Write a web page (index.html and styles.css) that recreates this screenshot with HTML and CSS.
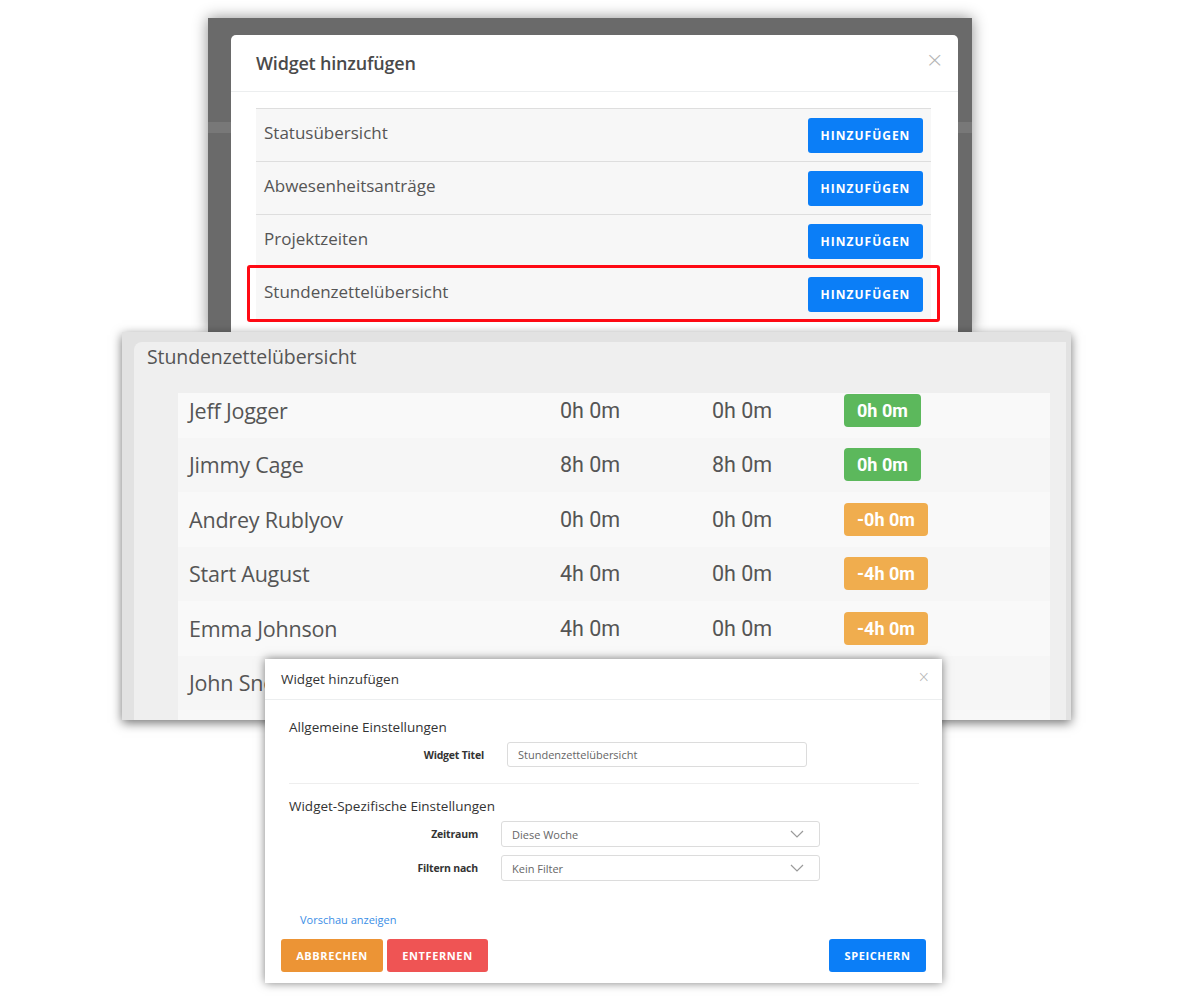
FILE: index.html
```html
<!DOCTYPE html>
<html>
    <head>
        <meta charset="utf-8">
        <link rel="stylesheet" href="styles.css">
    </head>
    <body>
        <div class="canvas">

            <div class="shot shot-picker">
                <div class="modal">
                    <div class="modal-header">
                        <span class="modal-title">Widget hinzufügen</span>
                        <span class="close">&times;</span>
                    </div>
                    <div class="modal-body">
                        <div class="widget-list">
                            <div class="widget-row">
                                <span>Statusübersicht</span>
                                <button class="btn btn-blue">HINZUFÜGEN</button>
                            </div>
                            <div class="widget-row">
                                <span>Abwesenheitsanträge</span>
                                <button class="btn btn-blue">HINZUFÜGEN</button>
                            </div>
                            <div class="widget-row">
                                <span>Projektzeiten</span>
                                <button class="btn btn-blue">HINZUFÜGEN</button>
                            </div>
                            <div class="widget-row">
                                <span>Stundenzettelübersicht</span>
                                <button class="btn btn-blue">HINZUFÜGEN</button>
                            </div>
                            <div class="highlight"></div>
                        </div>
                    </div>
                </div>
            </div>

            <div class="shot shot-widget">
                <div class="widget">
                    <div class="widget-title">Stundenzettelübersicht</div>
                    <div class="sheet-scroll">
                        <div class="sheet">
                            <div class="sheet-row">
                                <span class="name">Jeff Jogger</span>
                                <span class="time">0h 0m</span>
                                <span class="time">0h 0m</span>
                                <span><span class="badge badge-green">0h 0m</span></span>
                            </div>
                            <div class="sheet-row">
                                <span class="name">Jimmy Cage</span>
                                <span class="time">8h 0m</span>
                                <span class="time">8h 0m</span>
                                <span><span class="badge badge-green">0h 0m</span></span>
                            </div>
                            <div class="sheet-row">
                                <span class="name">Andrey Rublyov</span>
                                <span class="time">0h 0m</span>
                                <span class="time">0h 0m</span>
                                <span><span class="badge badge-orange">-0h 0m</span></span>
                            </div>
                            <div class="sheet-row">
                                <span class="name">Start August</span>
                                <span class="time">4h 0m</span>
                                <span class="time">0h 0m</span>
                                <span><span class="badge badge-orange">-4h 0m</span></span>
                            </div>
                            <div class="sheet-row">
                                <span class="name">Emma Johnson</span>
                                <span class="time">4h 0m</span>
                                <span class="time">0h 0m</span>
                                <span><span class="badge badge-orange">-4h 0m</span></span>
                            </div>
                            <div class="sheet-row">
                                <span class="name">John Snow</span>
                                <span class="time">8h 0m</span>
                                <span class="time">8h 0m</span>
                                <span><span class="badge badge-green">0h 0m</span></span>
                            </div>
                        </div>
                    </div>
                </div>
            </div>

            <div class="shot shot-settings">
                <div class="settings-header">
                    <span>Widget hinzufügen</span>
                    <span class="close small">&times;</span>
                </div>
                <div class="settings-body">
                    <div class="section-title">Allgemeine Einstellungen</div>
                    <div class="form-row">
                        <label>Widget Titel</label>
                        <input class="field field-text" type="text" value="Stundenzettelübersicht">
                    </div>
                    <hr class="divider">
                    <div class="section-title">Widget-Spezifische Einstellungen</div>
                    <div class="form-row form-row-select">
                        <label>Zeitraum</label>
                        <div class="field field-select">
                            <span>Diese Woche</span>
                            <svg width="14" height="8" viewBox="0 0 14 8"><path d="M1 1l6 6 6-6" fill="none" stroke="#9a9a9a" stroke-width="1.2"/></svg>
                        </div>
                    </div>
                    <div class="form-row form-row-select">
                        <label>Filtern nach</label>
                        <div class="field field-select">
                            <span>Kein Filter</span>
                            <svg width="14" height="8" viewBox="0 0 14 8"><path d="M1 1l6 6 6-6" fill="none" stroke="#9a9a9a" stroke-width="1.2"/></svg>
                        </div>
                    </div>
                    <a class="preview-link" href="#">Vorschau anzeigen</a>
                </div>
                <div class="settings-footer">
                    <button class="btn btn-small btn-orange">ABBRECHEN</button>
                    <button class="btn btn-small btn-red">ENTFERNEN</button>
                    <span class="spacer"></span>
                    <button class="btn btn-small btn-blue btn-save">SPEICHERN</button>
                </div>
            </div>

        </div>
    </body>
</html>
```

FILE: styles.css
```css
* {
    box-sizing: border-box;
}
body {
    margin: 0;
    background: #fff;
    font-family: "Open Sans", "Noto Sans", sans-serif;
}
.canvas {
    position: relative;
    width: 1200px;
    height: 1000px;
}

/* the three screenshots lie on a free canvas */
.shot {
    position: absolute;
}

/* ---- top: widget picker ---- */
.shot-picker {
    left: 208px;
    top: 18px;
    width: 764px;
    height: 314px;
    padding: 17px 14px 0 23px;
    background: linear-gradient(to bottom, #6a6a6a 104px, #787878 104px, #787878 115px, #6a6a6a 115px);
    box-shadow: 0 0 14px rgba(0, 0, 0, 0.45);
    overflow: hidden;
}
.modal {
    height: 100%;
    background: #fff;
    border-radius: 5px 5px 0 0;
}
.modal-header {
    height: 57px;
    padding: 0 14px 0 25px;
    display: flex;
    align-items: center;
    justify-content: space-between;
    border-bottom: 1px solid #eceeef;
}
.modal-title {
    font-size: 18px;
    font-weight: 600;
    color: #4a4a4a;
    letter-spacing: -0.2px;
}
.close {
    font-size: 22px;
    color: #b5b5b5;
    font-family: "DejaVu Sans", sans-serif;
    font-weight: 300;
    margin-top: -8px;
}
.modal-body {
    padding: 16px 27px 0 25px;
}
.widget-list {
    position: relative;
}
.widget-row {
    height: 53px;
    padding: 0 8px;
    display: flex;
    align-items: center;
    justify-content: space-between;
    background: #f7f7f7;
    border-top: 1px solid #dedede;
    font-size: 17px;
    color: #555;
}
.widget-row span {
    margin-bottom: 6px;
}
.highlight {
    position: absolute;
    left: -9px;
    top: 157px;
    width: 693px;
    height: 57px;
    border: 3px solid #ff0a14;
    border-radius: 3px;
}
.btn {
    border: none;
    color: #fff;
    font-family: "Open Sans", sans-serif;
    font-weight: 700;
    border-radius: 3px;
    cursor: pointer;
}
.widget-row .btn {
    width: 115px;
    height: 35px;
    font-size: 12px;
    letter-spacing: 1px;
}
.btn-blue {
    background: #0b7ef7;
}

/* ---- middle: timesheet widget ---- */
.shot-widget {
    left: 122px;
    top: 332px;
    width: 949px;
    height: 388px;
    padding: 10px 5px 0 12px;
    background: #e2e2e2;
    box-shadow: 0 3px 10px rgba(0, 0, 0, 0.55);
    overflow: hidden;
}
.widget {
    height: 100%;
    background: #efefef;
    border-radius: 8px 0 0 0;
    padding: 0 16px 0 44px;
    display: flex;
    flex-direction: column;
}
.widget-title {
    margin-left: -31px;
    height: 51px;
    padding-top: 1px;
    font-size: 19.5px;
    color: #555;
    letter-spacing: -0.1px;
}
.sheet-scroll {
    flex: 1;
    overflow: hidden;
    background: #f8f8f8;
}
.sheet {
    margin-top: -10px;
}
.sheet-row {
    height: 54.5px;
    padding-left: 11px;
    display: grid;
    grid-template-columns: 371px 152px 132px 1fr;
    align-items: center;
    background: #f9f9f9;
}
.sheet-row:nth-child(even) {
    background: #f6f6f6;
}
.name {
    font-size: 21.5px;
    color: #555;
    letter-spacing: -0.2px;
}
.time {
    font-family: Roboto, sans-serif;
    font-size: 21.5px;
    color: #555;
}
.badge {
    display: inline-block;
    height: 33px;
    line-height: 33px;
    padding: 0 13px;
    border-radius: 4px;
    font-family: Roboto, sans-serif;
    font-weight: 700;
    font-size: 18px;
    color: #fff;
}
.badge-green {
    background: #5cb85c;
}
.badge-orange {
    background: #f0ad4e;
}

/* ---- bottom: widget settings ---- */
.shot-settings {
    left: 265px;
    top: 659px;
    width: 677px;
    height: 324px;
    background: #fff;
    box-shadow: 0 0 9px rgba(0, 0, 0, 0.5);
    display: flex;
    flex-direction: column;
}
.settings-header {
    height: 41px;
    padding: 0 12px 0 16px;
    display: flex;
    align-items: center;
    justify-content: space-between;
    border-bottom: 1px solid #eceeef;
    font-size: 13.5px;
    color: #333;
}
.close.small {
    font-size: 15px;
    margin-top: -4px;
}
.settings-body {
    padding: 17px 23px 0 24px;
    display: flex;
    flex-direction: column;
}
.section-title {
    font-size: 13.5px;
    color: #333;
    line-height: 20px;
}
.form-row {
    display: grid;
    grid-template-columns: 195px 300px;
    column-gap: 23px;
    align-items: center;
    margin-top: 5px;
}
.form-row label {
    text-align: right;
    font-size: 10.5px;
    font-weight: 700;
    letter-spacing: -0.2px;
    color: #333;
}
.form-row-select {
    grid-template-columns: 189px 319px;
}
.form-row-select + .form-row-select {
    margin-top: 8px;
}
.field {
    height: 26px;
    border: 1px solid #dcdcdc;
    border-radius: 3px;
    padding: 0 10px;
    font-family: "Open Sans", sans-serif;
    font-size: 11px;
    color: #666;
}
.field-text {
    height: 25px;
    outline: none;
}
.field-select {
    display: flex;
    align-items: center;
    justify-content: space-between;
    padding-right: 15px;
}
.divider {
    border: none;
    border-top: 1px solid #eee;
    margin: 16px 0 12px;
}
.preview-link {
    margin: 31px 0 0 11px;
    font-size: 11px;
    color: #3a8ee6;
    text-decoration: none;
    line-height: 16px;
}
.settings-footer {
    margin-top: 11px;
    padding: 0 16px;
    display: flex;
    gap: 4px;
}
.spacer {
    flex: 1;
}
.btn-small {
    height: 33px;
    font-size: 11px;
    letter-spacing: 0.6px;
}
.btn-orange {
    width: 102px;
    background: #ec9435;
}
.btn-red {
    width: 101px;
    background: #ef5454;
}
.btn-save {
    width: 97px;
}
```
